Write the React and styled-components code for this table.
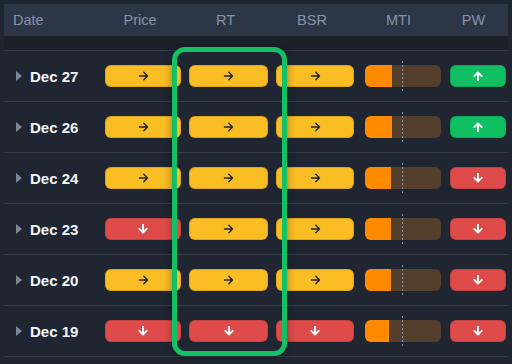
import React from "react";
import styled, { createGlobalStyle } from "styled-components";

const GlobalStyle = createGlobalStyle`
  html, body {
    margin: 0;
    padding: 0;
    background: #1f2631;
  }
  body {
    font-family: "Liberation Sans", Arial, sans-serif;
  }
`;

const Page = styled.div`
  position: relative;
  width: 512px;
  height: 364px;
  overflow: hidden;
  background: #1f2631;
  padding: 4px 0 0 4px;
  box-sizing: border-box;
`;

const Table = styled.div`
  width: 504px;
`;

const COLS = "97px 84px 87px 86px 87px 63px";

const HeaderRow = styled.div`
  display: grid;
  grid-template-columns: ${COLS};
  height: 32px;
  align-items: center;
  background: #2c3646;
`;

const HeadCell = styled.div`
  color: #8793a6;
  font-size: 14.5px;
  text-align: ${(p) => (p.$left ? "left" : "center")};
  padding-left: ${(p) => (p.$left ? "9px" : "0")};
  padding-right: ${(p) => (p.$left ? "0" : "6px")};
`;

const Spacer = styled.div`
  height: 14px;
  background: #1b212b;
  border-bottom: 1px solid #323c4a;
`;

const Row = styled.div`
  display: grid;
  grid-template-columns: ${COLS};
  height: 50px;
  align-items: center;
  border-bottom: 1px solid #323c4a;
`;

const DateCell = styled.div`
  display: flex;
  align-items: center;
  padding-left: 12px;
  gap: 8px;
  color: #f3f5f8;
  font-weight: bold;
  font-size: 15px;
`;

const Caret = styled.span`
  width: 0;
  height: 0;
  border-top: 5px solid transparent;
  border-bottom: 5px solid transparent;
  border-left: 6px solid #7c8594;
`;

const Cell = styled.div`
  padding: ${(p) => p.$pad || "0 4px"};
`;

const palette = {
  flat: { bg: "#fbbd24", fg: "#1c2330" },
  down: { bg: "#df4b4a", fg: "#ffffff" },
  up: { bg: "#0fbf62", fg: "#ffffff" },
};

const Pill = styled.div`
  height: 22px;
  border-radius: 6px;
  display: flex;
  align-items: center;
  justify-content: center;
  background: ${(p) => palette[p.$kind].bg};
  color: ${(p) => palette[p.$kind].fg};
  box-shadow: inset 0 0 0 1px rgba(0, 0, 0, 0.12);
`;

const Meter = styled.div`
  position: relative;
  height: 22px;
  border-radius: 6px;
  background: #533f2b;
`;

const MeterFill = styled.div`
  height: 100%;
  background: #ff8a00;
  border-radius: 6px 0 0 6px;
`;

const MidLine = styled.div`
  position: absolute;
  left: 37px;
  top: -4px;
  bottom: -4px;
  width: 1px;
  background: repeating-linear-gradient(
    to bottom,
    #8e97a6 0 2px,
    transparent 2px 4px
  );
`;

const Highlight = styled.div`
  position: absolute;
  left: 172px;
  top: 47px;
  width: 115px;
  height: 309px;
  box-sizing: border-box;
  border: 5px solid #14c064;
  border-radius: 13px;
  box-shadow: 0 0 10px rgba(0, 0, 0, 0.35);
  pointer-events: none;
`;

const Arrow = ({ kind }) => {
  if (kind === "flat") {
    return (
      <svg width="11" height="10" viewBox="0 0 11 10" fill="none" stroke="currentColor" strokeWidth="1.4" strokeLinecap="round" strokeLinejoin="round">
        <path d="M1.5 5 H9.5 M5.8 1.3 L9.5 5 L5.8 8.7" />
      </svg>
    );
  }
  const d =
    kind === "up"
      ? "M5 9.5 V1.5 M1.3 5.2 L5 1.5 L8.7 5.2"
      : "M5 0.5 V8.5 M1.3 4.8 L5 8.5 L8.7 4.8";
  return (
    <svg width="10" height="10" viewBox="0 0 10 10" fill="none" stroke="currentColor" strokeWidth="1.9" strokeLinecap="round" strokeLinejoin="round">
      <path d={d} />
    </svg>
  );
};

const rows = [
  { date: "Dec 27", price: "flat", rt: "flat", bsr: "flat", mti: 27, pw: "up" },
  { date: "Dec 26", price: "flat", rt: "flat", bsr: "flat", mti: 27, pw: "up" },
  { date: "Dec 24", price: "flat", rt: "flat", bsr: "flat", mti: 26, pw: "down" },
  { date: "Dec 23", price: "down", rt: "flat", bsr: "flat", mti: 26, pw: "down" },
  { date: "Dec 20", price: "flat", rt: "flat", bsr: "flat", mti: 26, pw: "down" },
  { date: "Dec 19", price: "down", rt: "down", bsr: "down", mti: 24, pw: "down" },
];

const App = () => {
  return (
    <Page>
      <GlobalStyle />
      <Table>
        <HeaderRow>
          <HeadCell $left>Date</HeadCell>
          <HeadCell>Price</HeadCell>
          <HeadCell>RT</HeadCell>
          <HeadCell>BSR</HeadCell>
          <HeadCell>MTI</HeadCell>
          <HeadCell>PW</HeadCell>
        </HeaderRow>
        <Spacer />
        {rows.map((r) => (
          <Row key={r.date}>
            <DateCell>
              <Caret />
              {r.date}
            </DateCell>
            <Cell>
              <Pill $kind={r.price}>
                <Arrow kind={r.price} />
              </Pill>
            </Cell>
            <Cell>
              <Pill $kind={r.rt}>
                <Arrow kind={r.rt} />
              </Pill>
            </Cell>
            <Cell>
              <Pill $kind={r.bsr}>
                <Arrow kind={r.bsr} />
              </Pill>
            </Cell>
            <Cell $pad="0 4px 0 7px">
              <Meter>
                <MeterFill style={{ width: r.mti + "px" }} />
                <MidLine />
              </Meter>
            </Cell>
            <Cell $pad="0 2px 0 5px">
              <Pill $kind={r.pw}>
                <Arrow kind={r.pw} />
              </Pill>
            </Cell>
          </Row>
        ))}
      </Table>
      <Highlight />
    </Page>
  );
};

export default App;
